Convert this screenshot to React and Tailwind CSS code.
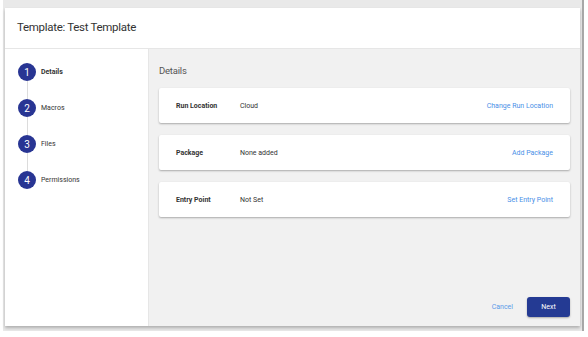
import React from "react";

const steps = [
  { n: 1, label: "Details", active: true },
  { n: 2, label: "Macros" },
  { n: 3, label: "Files" },
  { n: 4, label: "Permissions" },
];

const rows = [
  { label: "Run Location", value: "Cloud", action: "Change Run Location" },
  { label: "Package", value: "None added", action: "Add Package" },
  { label: "Entry Point", value: "Not Set", action: "Set Entry Point" },
];

export default function App() {
  return (
    <div className="w-[588px] h-[337px] bg-white overflow-hidden" style={{ fontFamily: "Roboto, 'Liberation Sans', sans-serif" }}>
      <div className="ml-[3px] w-[581px] h-[331px] bg-[#e9e9e9] border-r-[2px] border-r-[#a8a8a8] pt-[8px] pl-[2px] pr-[2px] pb-[4px]">
        <div className="w-[575px] h-[318px] bg-white flex flex-col shadow-[0_2px_3px_rgba(0,0,0,0.25)]">
          {/* header */}
          <div className="h-[41px] flex items-center px-[12px] border-b border-[#e6e6e6]">
            <h1 className="text-[11.5px] tracking-[-0.3px] text-[#333]">Template: Test Template</h1>
          </div>

          <div className="flex flex-1">
            {/* stepper */}
            <div className="w-[144px] border-r border-[#e6e6e6] pt-[14px] pl-[13px]">
              {steps.map((s, i) => (
                <div key={s.n}>
                  <div className="flex items-center gap-[5px]">
                    <div className="w-[18px] h-[18px] rounded-full bg-[#283593] text-white text-[10px] flex items-center justify-center">
                      {s.n}
                    </div>
                    <span className={"text-[7px] text-[#333] " + (s.active ? "font-bold" : "")}>
                      {s.label}
                    </span>
                  </div>
                  {i < steps.length - 1 && (
                    <div className="ml-[8.5px] w-px h-[18px] bg-[#dcdcdc]" />
                  )}
                </div>
              ))}
            </div>

            {/* main */}
            <div className="flex-1 bg-[#f1f1f1] pl-[10px] pr-[10px] pt-[15px] pb-[9px] flex flex-col">
              <h2 className="text-[9.5px] tracking-[-0.2px] text-[#555] mb-[10px]">Details</h2>
              <div className="flex flex-col gap-[12px]">
                {rows.map((r) => (
                  <div
                    key={r.label}
                    className="h-[35px] bg-white rounded-[2px] shadow-[0_1px_2px_rgba(0,0,0,0.3)] flex items-center pl-[17px] pr-[17px] text-[7px]"
                  >
                    <span className="w-[64px] font-bold text-[#333]">{r.label}</span>
                    <span className="text-[#333]">{r.value}</span>
                    <span className="ml-auto text-[#4a8fe7]">{r.action}</span>
                  </div>
                ))}
              </div>
              <div className="mt-auto flex items-center justify-end gap-[14px]">
                <span className="text-[7px] text-[#5a9ae8]">Cancel</span>
                <button className="w-[43px] h-[20px] rounded-[3px] bg-[#243a93] text-white text-[7px] shadow-[0_1px_2px_rgba(0,0,0,0.3)]">
                  Next
                </button>
              </div>
            </div>
          </div>
        </div>
      </div>
    </div>
  );
}
